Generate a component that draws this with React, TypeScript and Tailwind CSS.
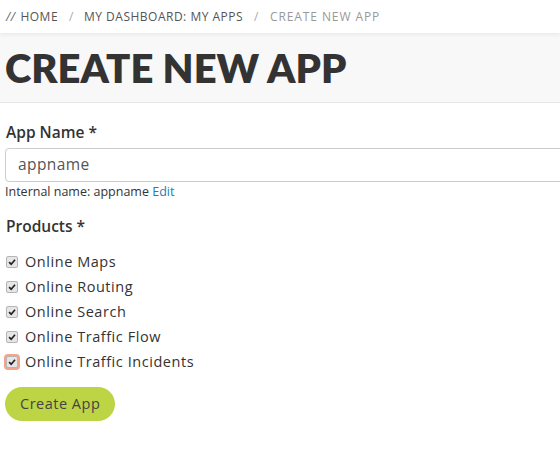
const products = [
  "Online Maps",
  "Online Routing",
  "Online Search",
  "Online Traffic Flow",
  "Online Traffic Incidents",
];

const Check = ({ focused }: { focused?: boolean }) => (
  <span
    className={
      "flex h-[12px] w-[12px] shrink-0 items-center justify-center rounded-[2px] border border-[#b5b5b5] bg-[#e6e6e6] " +
      (focused ? "ring-2 ring-[#f4a38c]" : "")
    }
  >
    <svg viewBox="0 0 12 12" className="h-[10px] w-[10px]">
      <path d="M2.5 6.2 L5 8.6 L9.6 3.2" fill="none" stroke="#222" strokeWidth="2" />
    </svg>
  </span>
);

const App = () => {
  return (
    <div className="min-h-[453px] overflow-hidden bg-white font-['Open_Sans',sans-serif] text-[#333]">
      <div className="relative z-10 flex h-[33px] items-center bg-white pl-[6px] text-[12px] uppercase tracking-[0.5px] text-[#555] shadow-[0_2px_4px_rgba(0,0,0,0.06)]">
        <span className="italic text-[#666]">//</span>
        <span className="ml-[5px]">Home</span>
        <span className="ml-[11px] mr-[10px] text-[#aaa]">/</span>
        <span>My Dashboard: My Apps</span>
        <span className="ml-[11px] mr-[11px] text-[#aaa]">/</span>
        <span className="tracking-[0.9px] text-[#999]">Create New App</span>
      </div>

      <div className="flex h-[70px] items-center border-b border-[#e5e5e5] bg-[#f8f8f8] pl-[5px]">
        <h1 className="font-['Lato',sans-serif] text-[40px] font-extrabold leading-none text-[#333]">CREATE NEW APP</h1>
      </div>

      <div className="pl-[5px] pt-[19px]">
        <label className="block pl-[1px] text-[15.5px] font-semibold leading-[20px]">App Name *</label>
        <div className="mt-[6px] flex h-[34px] w-[600px] items-center rounded-[4px] border border-[#cccccc] pl-[12px] text-[15.5px] tracking-[0.4px] text-[#555]">
          appname
        </div>
        <div className="mt-[1px] text-[12.5px] leading-[18px] text-[#333]">
          Internal name: appname <span className="text-[#1a80b6]">Edit</span>
        </div>

        <div className="mt-[15px] pl-[1px] text-[15.5px] font-semibold leading-[20px]">Products *</div>
        <div className="mt-[13px] flex flex-col pl-[1px]">
          {products.map((p, i) => (
            <div key={p} className="flex h-[25px] items-center gap-[7px] text-[14.5px] tracking-[0.55px]">
              <Check focused={i === products.length - 1} />
              <span>{p}</span>
            </div>
          ))}
        </div>

        <button className="mt-[13px] h-[34px] rounded-full bg-[#bdd444] px-[15px] text-[14.5px] tracking-[0.5px] text-[#444]">
          Create App
        </button>
      </div>
    </div>
  );
};

export default App;
